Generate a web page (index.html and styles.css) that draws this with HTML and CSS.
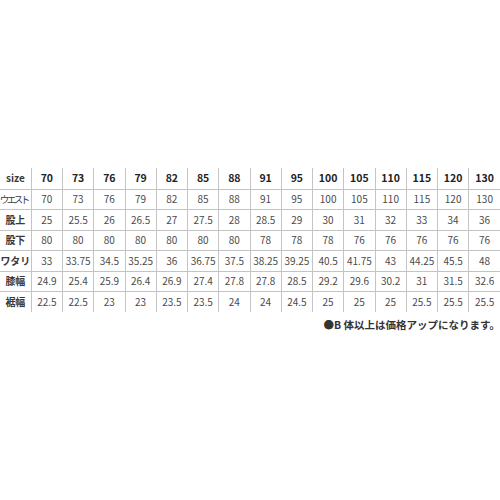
FILE: index.html
```html
<!DOCTYPE html>
<html lang="ja">
<head>
<meta charset="utf-8">
<title>サイズ表</title>
<link rel="stylesheet" href="styles.css">
</head>
<body>
<main class="page">
  <table class="size-table">
    <tr class="head">
      <td class="label">size</td><td>70</td><td>73</td><td>76</td><td>79</td><td>82</td><td>85</td><td>88</td><td>91</td><td>95</td><td>100</td><td>105</td><td>110</td><td>115</td><td>120</td><td>130</td>
    </tr>
    <tr>
      <td class="label"><span class="narrow">ウエスト</span></td><td>70</td><td>73</td><td>76</td><td>79</td><td>82</td><td>85</td><td>88</td><td>91</td><td>95</td><td>100</td><td>105</td><td>110</td><td>115</td><td>120</td><td>130</td>
    </tr>
    <tr>
      <td class="label">股上</td><td>25</td><td>25.5</td><td>26</td><td>26.5</td><td>27</td><td>27.5</td><td>28</td><td>28.5</td><td>29</td><td>30</td><td>31</td><td>32</td><td>33</td><td>34</td><td>36</td>
    </tr>
    <tr>
      <td class="label">股下</td><td>80</td><td>80</td><td>80</td><td>80</td><td>80</td><td>80</td><td>80</td><td>78</td><td>78</td><td>78</td><td>76</td><td>76</td><td>76</td><td>76</td><td>76</td>
    </tr>
    <tr>
      <td class="label">ワタリ</td><td>33</td><td>33.75</td><td>34.5</td><td>35.25</td><td>36</td><td>36.75</td><td>37.5</td><td>38.25</td><td>39.25</td><td>40.5</td><td>41.75</td><td>43</td><td>44.25</td><td>45.5</td><td>48</td>
    </tr>
    <tr>
      <td class="label">膝幅</td><td>24.9</td><td>25.4</td><td>25.9</td><td>26.4</td><td>26.9</td><td>27.4</td><td>27.8</td><td>27.8</td><td>28.5</td><td>29.2</td><td>29.6</td><td>30.2</td><td>31</td><td>31.5</td><td>32.6</td>
    </tr>
    <tr>
      <td class="label">裾幅</td><td>22.5</td><td>22.5</td><td>23</td><td>23</td><td>23.5</td><td>23.5</td><td>24</td><td>24</td><td>24.5</td><td>25</td><td>25</td><td>25</td><td>25.5</td><td>25.5</td><td>25.5</td>
    </tr>
  </table>
  <p class="note">●B 体以上は価格アップになります。</p>
</main>
</body>
</html>
```

FILE: styles.css
```css
html, body {
  margin: 0;
  padding: 0;
  background: #ffffff;
}

.page {
  width: 500px;
  height: 500px;
  padding-top: 168px;
  box-sizing: border-box;
  font-family: "Noto Sans CJK JP", "Noto Sans", sans-serif;
}

.size-table {
  width: 500px;
  table-layout: fixed;
  border-collapse: collapse;
}

.size-table td {
  height: 19.5px;
  padding: 0;
  text-align: center;
  vertical-align: middle;
  font-size: 10px;
  line-height: 12px;
  color: #4a4a4a;
  border: 1px solid #c4c4c4;
  white-space: nowrap;
  overflow: visible;
}

.size-table tr:first-child td { border-top: none; }
.size-table tr:last-child td { border-bottom: none; }
.size-table td:first-child { border-left: none; }
.size-table td:last-child { border-right: none; }

.size-table .head td {
  height: 20.5px;
  font-weight: bold;
  font-size: 10.5px;
  color: #222222;
}

.size-table td.label {
  font-weight: bold;
  color: #3a3a3a;
  font-size: 10px;
}

.narrow {
  font-weight: normal;
  font-size: 9.5px;
  letter-spacing: -2.5px;
  margin-left: -3px;
}

.note {
  margin: 6px 0 0 0;
  text-align: right;
  font-size: 10.5px;
  line-height: 14px;
  font-weight: bold;
  color: #333333;
}
```
